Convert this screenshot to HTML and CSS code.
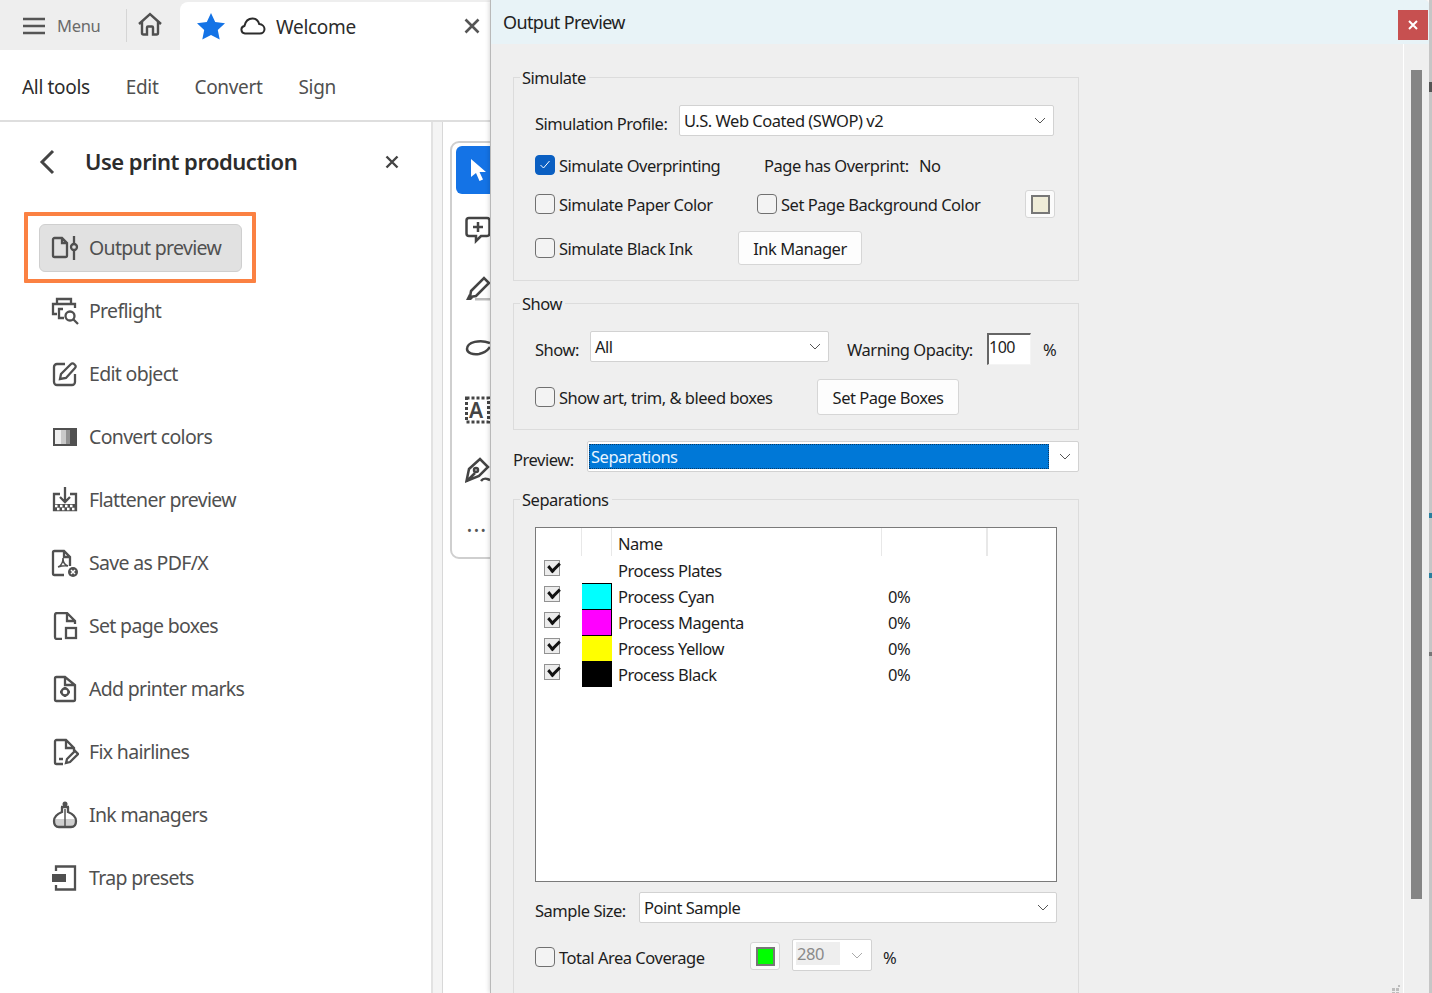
FILE: index.html
```html
<!DOCTYPE html>
<html lang="en">
<head>
<meta charset="utf-8">
<title>Output Preview</title>
<link rel="stylesheet" href="styles.css">
</head>
<body>
<div class="app">
  <div class="tabbar">
    <div class="menu">
      <svg class="i-menu" viewBox="0 0 22 18"><path d="M0 2h22M0 9h22M0 16h22"/></svg>
      <span>Menu</span>
    </div>
    <div class="home">
      <svg viewBox="0 0 26 24"><path d="M2 12 13 2l11 10M5 10v11a1.500 1.500 0 0 0 1.500 1.500H10v-7a1 1 0 0 1 1-1h4a1 1 0 0 1 1 1v7h3.500A1.500 1.500 0 0 0 21 21V10"/></svg>
    </div>
    <div class="tab">
      <svg class="star" viewBox="0 0 28 27"><path d="M14 0l4.200 8.900 9.800 1.300-7.200 6.700 1.900 9.700L14 21.900l-8.700 4.700 1.900-9.700L0 10.200l9.800-1.300z"/></svg>
      <svg class="cloud" viewBox="0 0 26 18"><path d="M6.500 16.500H5a3.800 3.800 0 0 1-.6-7.500C5.500 4 9 1.500 12.500 1.500c3.500 0 5.800 2.500 6.700 5.500 3 .3 5.300 2.500 5.300 5 0 2.600-2 4.500-4.700 4.500z"/></svg>
      <span class="tab-title">Welcome</span>
      <svg class="tab-x" viewBox="0 0 16 16"><path d="M1.500 1.500l13 13M14.500 1.500l-13 13"/></svg>
    </div>
  </div>
  <nav class="topnav">
    <a class="on">All tools</a><a>Edit</a><a>Convert</a><a>Sign</a>
  </nav>
  <div class="workspace">
    <aside class="panel">
      <header class="panel-head">
        <svg class="back" viewBox="0 0 16 26"><path d="M14 2 3 13l11 11"/></svg>
        <h1>Use print production</h1>
        <svg class="panel-x" viewBox="0 0 14 14"><path d="M1.500 1.500l11 11M12.500 1.500l-11 11"/></svg>
      </header>
      <div class="callout">
        <div class="tool tool-active">
          <svg viewBox="0 0 28 28"><path d="M11 4H3.500A1.500 1.500 0 0 0 2 5.500v16A1.500 1.500 0 0 0 3.500 23h11a1.500 1.500 0 0 0 1.500-1.500V9zM11 4v5h5M23 2v7.500M23 16.500V26"/><circle cx="23" cy="13" r="3"/></svg>
          <span>Output preview</span>
        </div>
      </div>
      <ul class="tools">
        <li class="tool"><svg viewBox="0 0 28 28"><path d="M6 7V2h14v5M6 17H2V7h22v4M12 12H8v9h5"/><circle cx="19" cy="19" r="4.500"/><path d="M22.500 22.500 27 27"/></svg><span>Preflight</span></li>
        <li class="tool"><svg viewBox="0 0 28 28"><path d="M14 4H6a3 3 0 0 0-3 3v15a3 3 0 0 0 3 3h15a3 3 0 0 0 3-3v-8"/><path d="M9 19l1-5L20 4a2 2 0 0 1 3 0l1 1a2 2 0 0 1 0 3L15 18z"/></svg><span>Edit object</span></li>
        <li class="tool"><svg viewBox="0 0 28 28"><rect x="2" y="5" width="24" height="18" fill="#505050" stroke="none"/><rect x="4" y="7" width="6" height="14" fill="#eee" stroke="none"/><rect x="10" y="7" width="5" height="14" fill="#c9c9c9" stroke="none"/><rect x="15" y="7" width="4" height="14" fill="#919191" stroke="none"/></svg><span>Convert colors</span></li>
        <li class="tool"><svg viewBox="0 0 28 28"><path d="M9 8H3v16h22V8h-6"/><path class="solid" d="M3 18h22v7H3z"/><path class="check-w" d="M4 20h20M6 23h18" stroke-dasharray="2.500 2.500"/><path d="M14 1v15M9 11l5 5 5-5"/></svg><span>Flattener preview</span></li>
        <li class="tool"><svg viewBox="0 0 28 28"><path d="M19 10v7M13 26H3.500A1.500 1.500 0 0 1 2 24.500v-21A1.500 1.500 0 0 1 3.500 2H13l6 6v2M13 2v6h6"/><path class="thin" d="M7 18c3-1 5-5 5-9 0 4 2 7 5 8-4-1-7 0-10 1z"/><circle cx="22" cy="23" r="5" class="solid"/><path class="x" d="M20 21l4 4M24 21l-4 4"/></svg><span>Save as PDF/X</span></li>
        <li class="tool"><svg viewBox="0 0 28 28"><path d="M11 27H6a2 2 0 0 1-2-2V3a2 2 0 0 1 2-2h10l8 8v3M16 1v8h8"/><rect x="15" y="16" width="10" height="10"/></svg><span>Set page boxes</span></li>
        <li class="tool"><svg viewBox="0 0 28 28"><path d="M14 2H5.500A1.500 1.500 0 0 0 4 3.500v21A1.500 1.500 0 0 0 5.500 26h17a1.500 1.500 0 0 0 1.500-1.500V10zM14 2v8h10"/><circle cx="14" cy="17" r="3.500"/><path d="M14 12v2M14 20v2M9 17h2M17 17h2"/></svg><span>Add printer marks</span></li>
        <li class="tool"><svg viewBox="0 0 28 28"><path d="M12 26H5.500A1.500 1.500 0 0 1 4 24.500v-21A1.500 1.500 0 0 1 5.500 2H15l8 8v3M15 2v8h8M8 21h4"/><path d="M15 25l1-4 8-8 3 3-8 8z"/></svg><span>Fix hairlines</span></li>
        <li class="tool"><svg viewBox="0 0 28 28"><circle cx="14" cy="3" r="2.500" class="solid"/><path class="fill-g" d="M4 18h20v3c0 3-2 4-4 4H8c-2 0-4-1-4-4z"/><path d="M10 6h8M11 6v5c-5 2-8 5-8 9 0 4 2 6 5 6h12c3 0 5-2 5-6 0-4-3-7-8-9V6"/><path class="thin" d="M14 8v17"/></svg><span>Ink managers</span></li>
        <li class="tool"><svg viewBox="0 0 28 28"><path d="M5 7V2.500h19v23H5V21"/><rect x="1" y="10" width="14" height="8" class="solid"/></svg><span>Trap presets</span></li>
      </ul>
    </aside>
    <div class="gutter"></div>
    <div class="canvas">
      <div class="toolcard">
        <div class="tb tb-active"><svg viewBox="0 0 18 24"><path d="M1 1v18l5-4 3.500 8 3.500-1.500L9.500 14H16z"/></svg></div>
        <div class="tb"><svg viewBox="0 0 26 28"><path d="M4 2h18a2.500 2.500 0 0 1 2.500 2.500v13A2.500 2.500 0 0 1 22 20h-6l-5 5v-5H4a2.500 2.500 0 0 1-2.500-2.500v-13A2.500 2.500 0 0 1 4 2zM13 6v10M8 11h10"/></svg></div>
        <div class="tb"><svg viewBox="0 0 26 28"><path d="M6 15 19 2l5 5-13 13-6 1z"/><path class="solid" d="M1 24l3-6 4 4-2 2z"/><path class="gray" d="M10 22h16v2.500H10z"/></svg></div>
        <div class="tb"><svg viewBox="0 0 26 28"><path d="M25 7C15 3 2 6 2 13c0 4 6 6 12 5 5-1 9-4 11-7"/></svg></div>
        <div class="tb"><svg viewBox="0 0 26 28"><path class="dash" d="M1.500 2h22v24h-22z"/></svg><b>A</b></div>
        <div class="tb"><svg viewBox="0 0 26 28"><path d="M1.500 25 4 13 15 3l8 8-9 9zM2 25l8-8"/><circle cx="11" cy="14" r="2"/><path d="M16 25c3-4 6-2 9-1"/></svg></div>
        <div class="tb tb-more">&#8226;&#8226;&#8226;</div>
      </div>
    </div>
  </div>
</div>

<section class="dialog">
  <div class="titlebar">
    <span>Output Preview</span>
    <div class="close"><svg viewBox="0 0 10 10"><path d="M1 1l8 8M9 1 1 9"/></svg></div>
  </div>
  <div class="dlg-main">
    <div class="dlg-body">
      <fieldset class="fs-sim">
        <legend>Simulate</legend>
        <div class="row h31">
          <label class="lb w144">Simulation Profile:</label>
          <div class="select w375"><span>U.S. Web Coated (SWOP) v2</span><svg viewBox="0 0 12 7"><path d="M1 1l5 5 5-5"/></svg></div>
        </div>
        <div class="row h20 mt19">
          <div class="check w229"><i class="box box-on"><svg viewBox="0 0 12 10"><path d="M1.500 5l3 3 6-7"/></svg></i><span>Simulate Overprinting</span></div>
          <span class="txt w155">Page has Overprint:</span><span class="txt">No</span>
        </div>
        <div class="row h28 mt15">
          <div class="check w222"><i class="box"></i><span>Simulate Paper Color</span></div>
          <div class="check w268"><i class="box"></i><span>Set Page Background Color</span></div>
          <div class="swatch"><i class="sw-paper"></i></div>
        </div>
        <div class="row h34 mt13">
          <div class="check w203"><i class="box"></i><span>Simulate Black Ink</span></div>
          <button class="btn w124">Ink Manager</button>
        </div>
      </fieldset>
      <fieldset class="fs-show">
        <legend>Show</legend>
        <div class="row h34 top">
          <label class="lb w55">Show:</label>
          <div class="select w239"><span>All</span><svg viewBox="0 0 12 7"><path d="M1 1l5 5 5-5"/></svg></div>
          <label class="lb w140 ml18">Warning Opacity:</label>
          <div class="input">100</div>
          <label class="lb ml12">%</label>
        </div>
        <div class="row h36 mt14">
          <div class="check w282"><i class="box"></i><span>Show art, trim, &amp; bleed boxes</span></div>
          <button class="btn w142">Set Page Boxes</button>
        </div>
      </fieldset>
      <div class="row h31 preview">
        <label class="lb w74">Preview:</label>
        <div class="select w492"><em>Separations</em><svg viewBox="0 0 12 7"><path d="M1 1l5 5 5-5"/></svg></div>
      </div>
      <fieldset class="fs-sep">
        <legend>Separations</legend>
        <div class="plates">
          <div class="phead"><i class="c1"></i><i class="c2"></i><span class="c3">Name</span><i class="c4"></i><i class="c5"></i></div>
          <div class="prow"><i class="pc"></i><i class="chip"></i><span class="pname">Process Plates</span></div>
          <div class="prow"><i class="pc"></i><i class="chip cyan"></i><span class="pname">Process Cyan</span><span>0%</span></div>
          <div class="prow"><i class="pc"></i><i class="chip magenta"></i><span class="pname">Process Magenta</span><span>0%</span></div>
          <div class="prow"><i class="pc"></i><i class="chip yellow"></i><span class="pname">Process Yellow</span><span>0%</span></div>
          <div class="prow"><i class="pc"></i><i class="chip black"></i><span class="pname">Process Black</span><span>0%</span></div>
        </div>
        <div class="row h31 mt10">
          <label class="lb w104">Sample Size:</label>
          <div class="select w418"><span>Point Sample</span><svg viewBox="0 0 12 7"><path d="M1 1l5 5 5-5"/></svg></div>
        </div>
        <div class="row h32 mt16 top">
          <div class="check w215 drop"><i class="box"></i><span>Total Area Coverage</span></div>
          <div class="swatch drop4"><i class="sw-green"></i></div>
          <div class="select w80 ml12 disabled"><span>280</span><svg viewBox="0 0 12 7"><path d="M1 1l5 5 5-5"/></svg></div>
          <label class="lb ml11 pct">%</label>
        </div>
        <div class="row lastrow"><span class="txt w187">Sample Type:</span><span class="txt">Normal</span></div>
      </fieldset>
    </div>
    <div class="scroll"><div class="thumb"></div></div>
    <svg class="grip" viewBox="0 0 8 8"><path d="M6 0h2v2H6zM0 3h3v3H0zM4 3h3v3H4zM0 7h3v1H0zM4 7h3v1H4z"/></svg>
  </div>
</section>
<i class="edge edge-a"></i><i class="edge edge-b"></i><i class="edge edge-c"></i><i class="edge edge-d"></i><i class="edge edge-e"></i>
</body>
</html>
```
FILE: styles.css
```css
* { box-sizing: border-box; }
html, body { margin: 0; height: 993px; overflow: hidden; background: #fff; }
body { font-family: "Noto Sans", "Open Sans", sans-serif; color: #2c2c2c; position: relative; width: 1432px; }
svg { display: block; fill: none; stroke: #505050; stroke-width: 2; flex: none; }

/* app behind the dialog */
.app { width: 490px; height: 993px; overflow: hidden; }
.tabbar { display: flex; height: 50px; background: #eee; }
.menu { width: 127px; display: flex; align-items: center; padding: 0 0 0 23px; gap: 12px; font-size: 16.5px; letter-spacing: -.3px; color: #6a6a6a; border-right: 1px solid #d5d5d5; margin: 9px 0 8px; }
.i-menu { width: 22px; height: 18px; stroke: #555; stroke-width: 2.5; }
.home { width: 53px; display: flex; align-items: center; justify-content: center; }
.home svg { width: 26px; height: 24px; margin-right: 8px; margin-bottom: 2px; stroke-width: 2.4; }
.tab { flex: 1; margin-top: 2px; background: #fff; border-radius: 8px 0 0 0; display: flex; align-items: center; padding: 0 10px 0 17px; }
.star { width: 28px; height: 27px; fill: #1473e6; stroke: none; }
.cloud { width: 26px; height: 18px; margin-left: 15px; stroke: #2c2c2c; }
.tab-title { font-size: 19px; letter-spacing: -.3px; margin-left: 10px; padding-top: 2px; color: #2c2c2c; flex: 1; }
.tab-x { width: 16px; height: 16px; stroke: #555; stroke-width: 2.6; }

.topnav { height: 72px; display: flex; align-items: center; padding: 3px 0 0 22px; gap: 36px; border-bottom: 2px solid #dedede; font-size: 19px; letter-spacing: -.33px; color: #505050; }
.topnav .on { color: #2c2c2c; }

.workspace { display: flex; height: 871px; }
.panel { width: 431px; flex: none; }
.panel-head { display: flex; align-items: center; height: 80px; padding: 0 0 0 39px; }
.back { width: 16px; height: 26px; stroke: #444; stroke-width: 3; }
.panel-head h1 { margin: 0 0 2px 30px; font-size: 22px; font-weight: 600; letter-spacing: -.5px; color: #2c2c2c; width: 301px; }
.panel-x { width: 14px; height: 14px; stroke: #444; stroke-width: 2.4; margin-left: -1px; }
.callout { margin: 10px 0 -4px 24px; width: 232px; height: 71px; border: 4px solid #fb8142; padding: 8px 0 0 11px; border-radius: 1px; }
.tool { display: flex; align-items: center; gap: 10px; height: 63px; padding-left: 51px; font-size: 19.5px; letter-spacing: -.68px; color: #505050; list-style: none; }
.tool-active { height: 48px; width: 203px; padding-left: 11px; background: #e1e1e1; border: 1px solid #cfcfcf; border-radius: 6px; }
.tool-active span { margin-bottom: 2px; }
.tools { margin: 0; padding: 0; }
.tool svg { width: 28px; height: 28px; stroke-width: 2.300; }
.tool .solid { fill: #505050; stroke: none; }
.tool .x { stroke: #fff; stroke-width: 1.500; }
.tool .thin { stroke-width: 1.500; }
.tool .check-w { stroke: #fff; stroke-width: 2.500; }
.tool .fill-g { fill: #cfcfcf; stroke: none; }

.gutter { width: 12px; flex: none; background: #f4f4f4; border-left: 2px solid #e2e2e2; border-right: 1px solid #d8d8d8; }
.canvas { flex: 1; padding: 19px 0 0 7px; }
.toolcard { width: 80px; height: 418px; border: 2px solid #cfcfcf; border-radius: 9px; padding: 3px 0 0 4px; }
.tb { position: relative; height: 60px; width: 60px; padding-left: 9px; display: flex; align-items: center; }
.tb svg { width: 26px; height: 28px; stroke: #444; stroke-width: 2.500; }
.tb-active { height: 48px; margin-bottom: 6px; background: #1473e6; border-radius: 6px; padding-left: 14px; }
.tb-active svg { width: 18px; height: 24px; fill: #fff; stroke: none; }
.tb .solid { fill: #444; stroke: none; }
.tb .gray { fill: #bbb; stroke: none; }
.tb .dash { stroke-dasharray: 3 2; stroke-width: 3; }
.tb b { position: absolute; left: 13px; top: 17px; font-size: 21px; line-height: 26px; color: #444; font-weight: 600; }
.tb-more { font-size: 13px; letter-spacing: 2px; color: #555; padding-left: 11px; }

/* dialog */
.dialog { position: absolute; left: 490px; top: 0; width: 939px; height: 993px; background: #efefef; border-left: 1px solid #b9b9b9; box-shadow: -1px 0 4px rgba(0,0,0,.15); font-size: 16.5px; letter-spacing: -.48px; color: #1d1d1d; overflow: hidden; border-top-right-radius: 5px; }
.titlebar { height: 44px; background: #e8f3f7; display: flex; align-items: flex-start; justify-content: space-between; padding: 10px 1px 0 12px; font-size: 18px; letter-spacing: -.62px; line-height: 24px; color: #222; }
.close { width: 30px; height: 30px; background: #c75050; display: flex; align-items: center; justify-content: center; }
.close svg { width: 10px; height: 10px; stroke: #fff; stroke-width: 2; }
.dlg-main { display: flex; height: 949px; position: relative; }
.dlg-body { width: 913px; padding: 21px 0 0 22px; border-right: 1px solid #fff; }
.scroll { flex: 1; padding: 26px 0 0 7px; }
.thumb { width: 11px; height: 829px; background: #858585; }
.grip { position: absolute; left: 901px; bottom: 0; width: 8px; height: 8px; fill: #bdbdbd; stroke: none; }

fieldset { width: 566px; margin: 0; padding: 16px 0 14px 21px; border: 1px solid #dcdcdc; min-width: 0; }
legend { padding: 2px 3px 0 2px; margin-left: -15px; line-height: 22px; }
.fs-sim { padding-bottom: 15px; }
.fs-show { margin-top: 10px; }
.fs-sep { margin-top: 15px; height: 520px; }
.preview { margin-top: 11px; width: 566px; }

.row { display: flex; align-items: center; line-height: 24px; }
.top { align-items: flex-start; }
.h20 { height: 20px; } .h28 { height: 28px; } .h31 { height: 31px; } .h32 { height: 32px; } .h34 { height: 34px; } .h36 { height: 36px; }
.mt10 { margin-top: 10px; } .mt13 { margin-top: 13px; } .mt14 { margin-top: 14px; } .mt15 { margin-top: 15px; } .mt16 { margin-top: 16px; } .mt19 { margin-top: 19px; }
.ml11 { margin-left: 11px; } .ml12 { margin-left: 12px; } .ml18 { margin-left: 18px; }
.w55 { width: 55px; } .w74 { width: 74px; } .w80 { width: 80px; } .w104 { width: 104px; } .w124 { width: 124px; } .w140 { width: 140px; } .w142 { width: 142px; } .w144 { width: 144px; } .w155 { width: 155px; } .w187 { width: 187px; } .w203 { width: 203px; } .w215 { width: 215px; } .w222 { width: 222px; } .w229 { width: 229px; } .w239 { width: 239px; } .w268 { width: 268px; } .w282 { width: 282px; } .w375 { width: 375px; } .w418 { width: 418px; } .w492 { width: 492px; }
.lb { flex: none; display: block; padding-top: 6px; white-space: nowrap; }
.top .lb { padding-top: 7px; }
.preview .lb { padding-top: 7px; }
.txt { flex: none; white-space: nowrap; padding-top: 2px; }
.pct.lb { padding-top: 7px; }

.select { flex: none; height: 31px; background: #fff; border: 1px solid #d2d2d2; border-radius: 2px; display: flex; align-items: center; justify-content: space-between; padding: 0 7px 0 4px; white-space: nowrap; }
.select svg { width: 12px; height: 7px; stroke: #555; stroke-width: 1; }
.select em { font-style: normal; flex: 1; height: 25px; margin: 0 10px 0 -3px; background: #0078d7; color: #e8f4ff; line-height: 25px; padding-left: 2px; outline: 1px dotted #0a3a66; outline-offset: -1px; }
.disabled { height: 32px; color: #8a8a8a; padding: 0 8px 0 3px; background: #fff; }
.disabled span { background: #eee; width: 44px; height: 23px; line-height: 23px; margin-bottom: 3px; padding-left: 1px; }
.disabled svg { stroke: #aaa; }

.check { flex: none; display: flex; align-items: center; gap: 4px; white-space: nowrap; }
.check span { padding-top: 2px; }
.drop { margin-top: 5px; }
.drop4 { margin-top: 3px; }
.box { width: 20px; height: 20px; flex: none; background: #f3f3f3; border: 1px solid #707070; border-radius: 4px; display: flex; align-items: center; justify-content: center; }
.box-on { background: #0a5fc2; border-color: #0a5fc2; }
.box-on svg { width: 12px; height: 10px; stroke: #fff; stroke-width: 1; }

.swatch { flex: none; width: 30px; height: 28px; background: #fbfbfb; border: 1px solid #d6d6d6; border-radius: 3px; display: flex; align-items: center; justify-content: center; }
.sw-paper, .sw-green { display: block; width: 19px; height: 19px; border: 2px solid #777; }
.sw-paper { background: #efecd8; }
.sw-green { background: #00ff00; }
.btn { flex: none; height: 100%; background: #fdfdfd; border: 1px solid #d6d6d6; border-radius: 3px; font: inherit; letter-spacing: inherit; color: inherit; padding: 2px 0 0; }

.input { flex: none; width: 44px; height: 32px; margin-top: 2px; background: #fff; border: 1px solid #f4f4f4; border-left: 2px solid #666; border-top: 2px solid #666; font-size: 16px; line-height: 24px; padding-left: 0; }

.plates { width: 522px; height: 355px; background: #fff; border: 1px solid #7a7a7a; }
.phead { display: flex; height: 29px; }
.phead i { display: block; height: 28px; border-right: 1px solid #e8e8e8; flex: none; }
.c1 { width: 46px; } .c2 { width: 30px; } .c4 { width: 105px; }
.phead .c3 { width: 270px; height: 28px; padding-left: 6px; line-height: 31px; border-right: 1px solid #e8e8e8; }
.prow { display: flex; align-items: center; height: 26px; }
.pc { display: block; width: 16px; height: 16px; flex: none; margin: 0 0 4px 8px; border: 1px solid #929292; background: #ececec; position: relative; }
.pc::after { content: ""; position: absolute; left: 2.500px; top: 1px; width: 9px; height: 5px; border-left: 3px solid #111; border-bottom: 3px solid #111; transform: rotate(-45deg) skewX(-5deg); }
.chip { display: block; width: 30px; height: 26px; flex: none; margin-left: 22px; }
.cyan { background: #00ffff; border-top: 1px solid #000; border-right: 1px solid #000; }
.magenta { background: #ff00ff; border-top: 1px solid #000; border-right: 1px solid #000; }
.yellow { background: #ffff00; border-top: 1px solid #000; }
.black { background: #000; }
.pname { width: 276px; padding-left: 6px; }
.lastrow { margin-top: 14px; }

.edge { position: absolute; left: 1429px; width: 3px; }
.edge-a { top: 0; height: 993px; background: #c6c6c6; }
.edge-b { top: 513px; height: 5px; background: #2a7f9e; }
.edge-c { top: 573px; height: 5px; background: #2a7f9e; }
.edge-d { top: 652px; height: 4px; background: #777; }
.edge-e { top: 82px; height: 10px; background: #555; }
```
